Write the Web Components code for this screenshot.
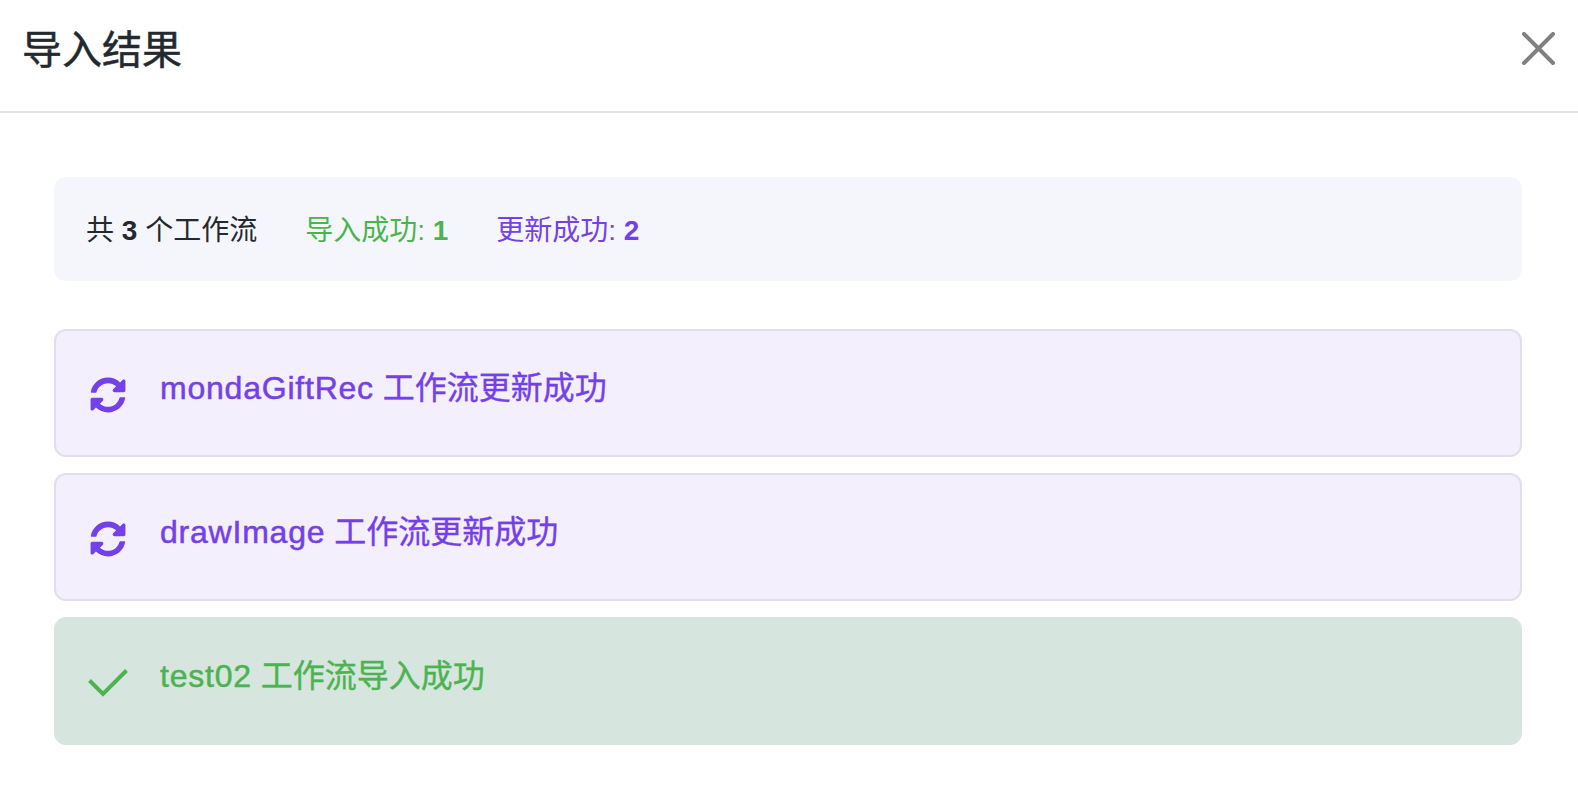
<!DOCTYPE html>
<html lang="zh">
<head>
<meta charset="utf-8">
<title>导入结果</title>
<style>
html, body { margin: 0; background: #fff; }
body { font-family: "Liberation Sans", "Noto Sans CJK SC", sans-serif; color: #24292f; }
</style>
</head>
<body>
<import-dialog title-text="导入结果">
  <import-summary total="3" created="1" updated="2"></import-summary>
  <import-item kind="update" name="mondaGiftRec">工作流更新成功</import-item>
  <import-item kind="update" name="drawImage">工作流更新成功</import-item>
  <import-item kind="success" name="test02">工作流导入成功</import-item>
</import-dialog>

<script>
const ICONS = {
    update: `<svg viewBox="0 0 512 512" width="36" height="36" fill="currentColor"><path d="M370.72 133.28C339.458 104.008 298.888 87.962 255.848 88c-77.458.068-144.328 53.178-162.791 126.85-1.344 5.363-6.122 9.15-11.651 9.15H24.103c-7.498 0-13.194-6.807-11.807-14.176C33.933 94.924 134.813 8 256 8c66.448 0 126.791 26.136 171.315 68.685L463.03 40.97C478.149 25.851 504 36.559 504 57.941V192c0 13.255-10.745 24-24 24H345.941c-21.382 0-32.09-25.851-16.971-40.971l41.75-41.749zM32 296h134.059c21.382 0 32.09 25.851 16.971 40.971l-41.75 41.75c31.262 29.273 71.835 45.319 114.876 45.28 77.418-.07 144.315-53.144 162.787-126.849 1.344-5.363 6.122-9.15 11.651-9.15h57.304c7.498 0 13.194 6.807 11.807 14.176C478.067 417.076 377.187 504 256 504c-66.448 0-126.791-26.136-171.315-68.685L48.97 471.03C33.851 486.149 8 475.441 8 454.059V320c0-13.255 10.745-24 24-24z"/></svg>`,
    success: `<svg viewBox="0 0 40 28" width="40" height="28" fill="none" stroke="currentColor" stroke-width="4"><path d="M1.5 11.5 L15 25 L38.5 1.5"/></svg>`
};

class ImportDialog extends HTMLElement {
    constructor() {
        super();
        this.attachShadow({ mode: "open" });
    }
    connectedCallback() {
        this.shadowRoot.innerHTML = `
        <style>
        :host { display: block; height: 796px; overflow: hidden; }
        header {
            display: flex; align-items: center; justify-content: space-between;
            height: 111px; padding: 0 23px 0 22px;
            border-bottom: 2px solid #e1e1e6;
        }
        h1 { margin: 0; font-size: 40px; font-weight: 400; line-height: 56px; color: #24292f; position: relative; top: -6px; -webkit-text-stroke: 0.5px currentColor; }
        .close { display: block; width: 33px; height: 33px; margin-top: -14px; color: #808080; }
        main { display: flex; flex-direction: column; padding: 64px 56px 0 54px; }
        </style>
        <header>
            <h1>${this.getAttribute("title-text")}</h1>
            <svg class="close" viewBox="0 0 33 33" fill="none" stroke="currentColor" stroke-width="4" stroke-linecap="round"><path d="M2 2 L31 31 M31 2 L2 31"/></svg>
        </header>
        <main><slot></slot></main>`;
    }
}

class ImportSummary extends HTMLElement {
    constructor() {
        super();
        this.attachShadow({ mode: "open" });
    }
    connectedCallback() {
        this.shadowRoot.innerHTML = `
        <style>
        :host {
            display: flex; align-items: center; gap: 48px;
            height: 104px; padding: 0 32px 2px; box-sizing: border-box; margin-bottom: 48px;
            background: #f5f6fb; border-radius: 12px;
            font-size: 28px; color: #24292f;
        }
        b { font-weight: 700; }
        .ok { color: #4cb350; }
        .up { color: #7440e8; }
        </style>
        <span>共 <b>${this.getAttribute("total")}</b> 个工作流</span>
        <span class="ok">导入成功: <b>${this.getAttribute("created")}</b></span>
        <span class="up">更新成功: <b>${this.getAttribute("updated")}</b></span>`;
    }
}

class ImportItem extends HTMLElement {
    constructor() {
        super();
        this.attachShadow({ mode: "open" });
    }
    connectedCallback() {
        const kind = this.getAttribute("kind");
        this.shadowRoot.innerHTML = `
        <style>
        :host {
            display: flex; box-sizing: border-box; height: 128px;
            margin-bottom: 16px; padding: 0 32px 0 34px;
            border: 2px solid transparent; border-radius: 12px;
            font-size: 32px;
        }
        :host([kind="update"]) { background: #f3effd; border-color: #e0dfea; color: #7440e8; }
        :host([kind="success"]) { background: #d6e6df; border-color: #d6e6df; color: #4cb350; }
        .icon { flex: none; width: 70px; display: flex; align-items: center; padding-top: 5px; margin-top: 9px; height: 100px; box-sizing: content-box; }
        :host([kind="success"]) .icon { margin-left: -2px; width: 72px; }
        .text { line-height: 44px; padding-top: 35px; -webkit-text-stroke: 0.35px currentColor; }
        .name { letter-spacing: 0.78px; -webkit-text-stroke: 0.5px currentColor; }
        </style>
        <span class="icon">${ICONS[kind]}</span>
        <span class="text"><span class="name">${this.getAttribute("name")}</span> <slot></slot></span>`;
    }
}

customElements.define("import-dialog", ImportDialog);
customElements.define("import-summary", ImportSummary);
customElements.define("import-item", ImportItem);
</script>
</body>
</html>
